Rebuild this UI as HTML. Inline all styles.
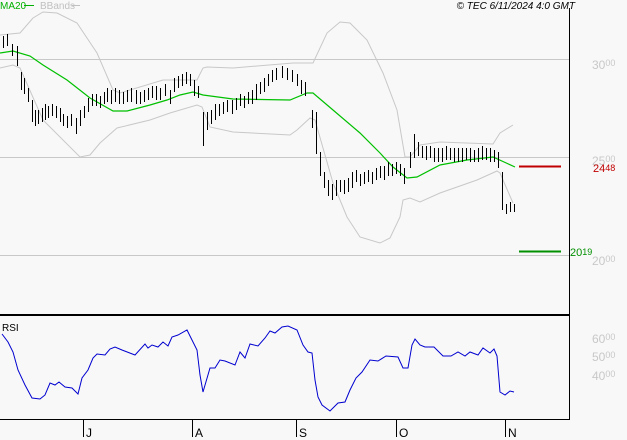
<!DOCTYPE html>
<html><head><meta charset="utf-8"><style>
html,body{margin:0;padding:0;background:#f8f8f8;width:627px;height:440px;overflow:hidden}
svg{display:block;font-family:"Liberation Sans",sans-serif}
</style></head><body>
<svg width="627" height="440" viewBox="0 0 627 440" xmlns="http://www.w3.org/2000/svg">
<rect width="627" height="440" fill="#f8f8f8"/>
<g stroke="#c8c8c8" stroke-width="1">
<line x1="0" y1="59.5" x2="569" y2="59.5"/>
<line x1="0" y1="157.5" x2="569" y2="157.5"/>
<line x1="0" y1="255.5" x2="569" y2="255.5"/>
</g>
<line x1="569.5" y1="8" x2="569.5" y2="420" stroke="#000"/>
<line x1="0" y1="315" x2="570" y2="315" stroke="#000" stroke-width="2"/>
<line x1="0" y1="419.5" x2="570" y2="419.5" stroke="#000"/>
<g stroke="#000">
<line x1="83.5" y1="419" x2="83.5" y2="437"/>
<line x1="192.5" y1="419" x2="192.5" y2="437"/>
<line x1="296.5" y1="419" x2="296.5" y2="437"/>
<line x1="396.5" y1="419" x2="396.5" y2="437"/>
<line x1="505.5" y1="419" x2="505.5" y2="437"/>
</g>
<g font-size="12" fill="#000">
<text x="86" y="437">J</text><text x="195" y="437">A</text><text x="299" y="437">S</text><text x="399" y="437">O</text><text x="508" y="437">N</text>
</g>
<text x="0" y="9" font-size="10" fill="#00b000">MA20</text>
<line x1="24" y1="5.5" x2="34" y2="5.5" stroke="#00b000"/>
<text x="40" y="9" font-size="10" fill="#c0c0c0">BBands</text>
<line x1="72" y1="5.5" x2="80" y2="5.5" stroke="#c0c0c0"/>
<text x="575" y="9" font-size="10" font-style="italic" fill="#000" text-anchor="end">© TEC 6/11/2024 4:0 GMT</text>
<g fill="none" stroke="#c8c8c8" stroke-width="1">
<polyline points="0,35 20,33 33,18 43,12 57,13 77,23 97,53 113,90 120,93 163,80 197,80 203,68 207,67 233,68 293,63 313,63 327,33 340,22 350,23 367,40 383,73 397,110 405,157 410,157 420,145 440,142 493,144 500,133 513,125"/>
<polyline points="0,68 13,65 20,68 43,120 80,157 90,155 100,143 117,128 150,120 170,113 197,105 202,107 210,127 233,132 290,135 297,130 310,118 315,120 333,183 347,217 360,237 380,243 390,238 400,217 403,200 410,198 420,202 440,193 477,180 497,171 500,173 513,203"/>
</g>
<polyline fill="none" stroke="#00c000" stroke-width="1.2" points="0,53 13,51 30,56 43,65 67,80 90,98 113,111 127,111 150,105 167,100 180,95 193,92 203,95 233,99 290,100 307,93 313,93 333,110 360,133 380,153 393,167 407,178 417,177 440,165 467,160 493,157 515,167"/>
<path fill="none" stroke="#000" stroke-width="1" d="M3.5 36V48M7.5 34V46M12.5 44V56M17.5 46V66M21.5 72V90M24.5 78V94M28.5 88V102M32.5 100V122M35.5 110V126M38.5 110V124M42.5 108V122M45.5 104V120M48.5 106V118M52.5 104V116M56.5 106V118M60.5 108V122M63.5 114V126M67.5 116V128M71.5 114V126M76.5 118V134M80.5 110V126M84.5 106V118M88.5 98V112M92.5 94V106M96.5 94V106M100.5 96V108M104.5 92V104M107.5 88V102M111.5 90V104M115.5 88V102M119.5 90V104M123.5 92V104M127.5 90V102M131.5 88V102M136.5 90V104M140.5 92V104M144.5 90V102M148.5 88V100M152.5 86V98M156.5 86V100M160.5 88V100M165.5 84V96M170.5 90V104M174.5 78V92M178.5 76V88M182.5 74V86M186.5 72V84M190.5 74V86M194.5 80V96M198.5 86V98M203.5 112V146M207.5 112V130M211.5 110V124M215.5 104V120M219.5 104V116M223.5 102V114M227.5 100V112M232.5 100V114M236.5 98V110M240.5 94V106M244.5 96V108M248.5 92V104M252.5 90V104M256.5 84V100M260.5 82V94M264.5 78V92M268.5 74V86M272.5 70V82M276.5 68V80M282.5 66V78M287.5 68V80M292.5 70V82M297.5 74V86M301.5 80V94M305.5 82V96M312.5 110V128M316.5 112V154M320.5 152V176M324.5 172V188M328.5 180V196M332.5 184V200M336.5 180V196M340.5 180V192M344.5 180V194M348.5 178V192M352.5 172V188M356.5 170V182M360.5 174V186M364.5 172V184M368.5 170V182M372.5 172V184M376.5 168V180M380.5 166V178M384.5 166V180M388.5 162V176M392.5 164V176M396.5 162V174M400.5 164V176M404.5 168V184M410.5 152V168M414.5 134V158M418.5 142V156M422.5 146V158M426.5 146V160M430.5 146V158M434.5 148V162M438.5 148V162M442.5 148V162M446.5 146V160M450.5 148V160M454.5 148V162M458.5 148V162M462.5 148V162M466.5 148V160M470.5 148V162M474.5 150V162M478.5 148V162M482.5 146V160M486.5 148V160M490.5 148V162M494.5 150V162M498.5 152V168M502.5 172V210M506.5 204V214M510.5 202V212M514.5 204V212"/>
<line x1="519" y1="166.5" x2="561" y2="166.5" stroke="#c00000" stroke-width="2"/>
<line x1="519" y1="251.5" x2="561" y2="251.5" stroke="#009000" stroke-width="2"/>
<g font-size="12" fill="#c8c8c8">
<text x="592" y="69">30<tspan font-size="9" dy="-3">00</tspan></text>
<text x="592" y="165">25<tspan font-size="9" dy="-3">00</tspan></text>
<text x="592" y="265">20<tspan font-size="9" dy="-3">00</tspan></text>
<text x="592" y="343">60<tspan font-size="9" dy="-3">00</tspan></text>
<text x="592" y="361">50<tspan font-size="9" dy="-3">00</tspan></text>
<text x="592" y="380">40<tspan font-size="9" dy="-3">00</tspan></text>
</g>
<text x="593" y="172" font-size="11" fill="#c00000">24<tspan font-size="9" dy="-1">48</tspan></text>
<text x="570" y="256" font-size="11" fill="#009000">20<tspan font-size="9" dy="-1">19</tspan></text>
<text x="2" y="331" font-size="10" fill="#000">RSI</text>
<polyline fill="none" stroke="#0000d0" stroke-width="1" points="2,334 8,342 13,352 18,370 25,385 32,398 40,399 45,395 50,383 55,385 59,382 65,387 72,388 78,394 82,378 88,370 93,358 97,354 105,355 110,349 115,347 122,350 135,355 145,344 148,348 152,345 158,347 163,342 168,346 172,337 178,335 187,330 193,342 197,350 200,375 203,392 210,368 215,368 220,360 225,361 235,365 240,352 245,358 250,344 258,346 265,338 270,331 275,333 282,327 288,326 297,330 303,345 308,352 312,353 315,380 318,397 322,405 330,411 338,403 345,402 350,390 356,378 362,372 370,360 378,361 386,356 398,357 403,368 408,368 412,345 415,339 420,345 425,347 434,347 443,356 451,356 458,352 465,356 470,352 478,355 483,348 490,353 494,349 497,356 500,392 505,395 510,391 514,392"/>
</svg>
</body></html>
